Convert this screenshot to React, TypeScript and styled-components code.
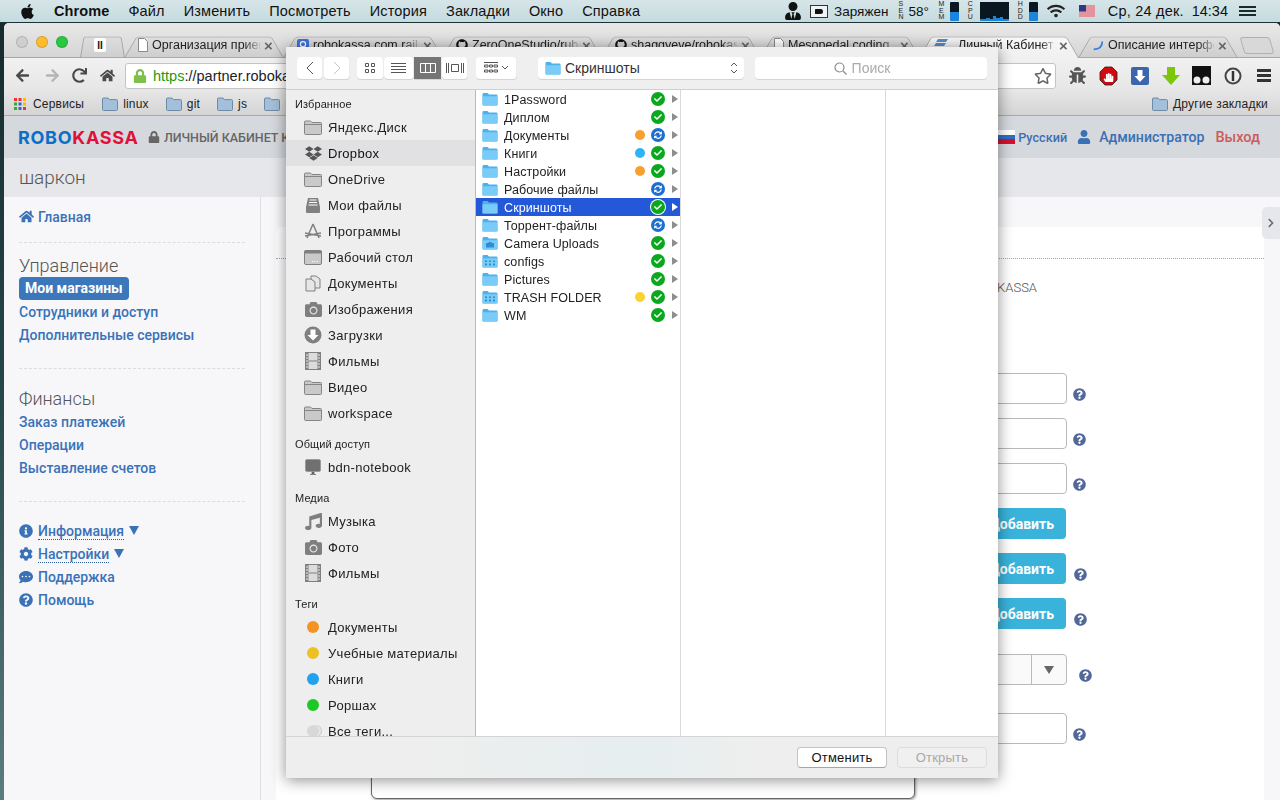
import React from 'react'
import styled, { createGlobalStyle } from 'styled-components'
import {
  FaApple,
  FaArrowLeft,
  FaArrowRight,
  FaBug,
  FaCamera,
  FaCheck,
  FaChevronRight,
  FaCog,
  FaCommentDots,
  FaDropbox,
  FaGithub,
  FaHandPaper,
  FaHome,
  FaInfoCircle,
  FaLock,
  FaMusic,
  FaQuestionCircle,
  FaRedo,
  FaRegStar,
  FaSyncAlt,
  FaUser,
  FaUserTie,
  FaWifi,
} from 'react-icons/fa'

const mac = '"Liberation Sans", Arial, sans-serif'
const web = 'Roboto, "Liberation Sans", sans-serif'

const GlobalStyle = createGlobalStyle`
  html, body {
    margin: 0;
    width: 1280px;
    height: 800px;
    overflow: hidden;
    background: linear-gradient(180deg, #16292c 0%, #27474a 50%, #5b7d80 100%);
  }
  * { box-sizing: border-box; }
`

const Screen = styled.div`
  position: relative;
  width: 1280px;
  height: 800px;
  display: flex;
  flex-direction: column;
  overflow: hidden;
  font-family: ${mac};
`

/* mac menu bar */
const MenuBar = styled.div`
  height: 23px;
  flex: none;
  display: flex;
  align-items: center;
  padding-left: 19px;
  background: linear-gradient(180deg, #d6e5e8, #c5dbe0);
  border-bottom: 1px solid #1d3336;
  color: #111;
  font-size: 14.5px;
`

const MenuItem = styled.span<{ $bold?: boolean }>`
  margin-left: ${({ $bold }) => ($bold ? '18px' : '19px')};
  font-weight: ${({ $bold }) => ($bold ? 700 : 400)};
  letter-spacing: ${({ $bold }) => ($bold ? '0.1px' : '0.15px')};
`

const Tray = styled.div`
  margin-left: auto;
  display: flex;
  align-items: center;
  height: 22px;
  padding-right: 24px;
`

const TrayItem = styled.span<{ $ml: number; $small?: boolean }>`
  margin-left: ${({ $ml }) => $ml}px;
  display: flex;
  align-items: center;
  white-space: nowrap;
  font-size: ${({ $small }) => ($small ? '13.5px' : 'inherit')};
`

const DateText = styled.span`
  letter-spacing: 0.2px;
`

const LetterStack = styled.span`
  display: flex;
  flex-direction: column;
  font-size: 7px;
  line-height: 6.5px;
  color: #222;
  width: 7px;
  text-align: center;
`

const MeterBar = styled.span`
  display: block;
  width: 9px;
  height: 19px;
  border-radius: 1px;
  background: linear-gradient(180deg, #0a1620 0 55%, #1b84dc 55% 100%);
`

const PlugBox = styled.span`
  display: flex;
  align-items: center;
  justify-content: center;
  width: 18px;
  height: 13px;
  border: 1px solid #333;
  background: #eef4f5;
`

const PlugDot = styled.span`
  width: 8px;
  height: 5px;
  border-radius: 1px 3px 3px 1px;
  background: #111;
`

const TrayList = styled.span`
  display: block;
  width: 17px;
  height: 10px;
  background: repeating-linear-gradient(180deg, #1a2a2c 0 2px, transparent 2px 4px);
`

/* browser window */
const Browser = styled.div`
  flex: 1;
  min-height: 0;
  margin-left: 4px;
  display: flex;
  flex-direction: column;
  border-radius: 5px 5px 0 0;
  overflow: hidden;
  background: #f7f7fa;
`

const TabStrip = styled.div`
  height: 35px;
  flex: none;
  display: flex;
  align-items: flex-end;
  padding-left: 12px;
  background: linear-gradient(180deg, #e8e8e8, #d6d6d6);
  border-bottom: 1px solid #a8a8a8;
`

const Lights = styled.div`
  display: flex;
  gap: 8px;
  width: 64px;
  align-self: flex-start;
  margin-top: 13px;
`

const Light = styled.span<{ $color: string }>`
  width: 12px;
  height: 12px;
  border-radius: 50%;
  background: ${({ $color }) => $color};
  box-shadow: inset 0 0 0 1px rgba(0, 0, 0, 0.14);
`

const Tab = styled.div<{ $active?: boolean; $width?: number }>`
  position: relative;
  isolation: isolate;
  flex: none;
  width: ${({ $width }) => $width ?? 160}px;
  margin-right: -1px;
  margin-bottom: -1px;
  height: 26px;
  display: flex;
  align-items: center;
  padding: 0 8px 0 ${({ $width }) => ($width ? 12 : 14)}px;
  gap: 4px;
  font-size: 12.5px;
  color: #222;

  svg { flex: none; }

  &::before {
    content: '';
    position: absolute;
    inset: 0;
    z-index: -1;
    border: 1px solid #a4a4a4;
    border-bottom: ${({ $active }) => ($active ? 'none' : '1px solid #a8a8a8')};
    border-radius: 4px 4px 0 0;
    background: ${({ $active }) =>
      $active ? 'linear-gradient(180deg, #f8f8f8, #f0f0f0)' : 'linear-gradient(180deg, #dedede, #cfcfcf)'};
    transform: perspective(34px) rotateX(14deg);
    transform-origin: bottom;
  }
`

const TabTitle = styled.span`
  flex: 1;
  min-width: 0;
  white-space: nowrap;
  -webkit-mask-image: linear-gradient(90deg, #000 85%, rgba(0, 0, 0, 0.15));
  mask-image: linear-gradient(90deg, #000 85%, rgba(0, 0, 0, 0.15));
`

const TabClose = styled.span`
  flex: none;
  color: #666;
  font-size: 15px;
  font-weight: 700;
  line-height: 1;
  width: 12px;
`

const PinIcon = styled.span`
  display: flex;
  justify-content: center;
  align-items: center;
  width: 12px;
  height: 14px;
  margin-left: 2px;
  border-radius: 2px;
  background: #fff;
  font-size: 10px;
  font-weight: 700;
  color: #111;
`

const NewTab = styled.span`
  flex: none;
  width: 30px;
  height: 17px;
  margin: 0 0 3px 5px;
  border: 1px solid #b0b0b0;
  border-radius: 3px;
  background: #d8d8d8;
  transform: skewX(16deg);
`

const UrlBar = styled.div`
  height: 33px;
  flex: none;
  display: flex;
  align-items: center;
  padding: 2px 0 0 2px;
  background: linear-gradient(180deg, #f1f1f1, #e6e6e6);
`

const NavIcon = styled.span<{ $width: number; $color?: string }>`
  width: ${({ $width }) => $width}px;
  flex: none;
  display: flex;
  justify-content: center;
  color: ${({ $color }) => $color ?? '#4a4a4a'};
  font-size: 15px;
`

const Omnibox = styled.div`
  width: 931px;
  flex: none;
  height: 26px;
  margin: 0 6px 0 3px;
  display: flex;
  align-items: center;
  gap: 6px;
  padding: 0 3px 0 7px;
  background: #fff;
  border: 1px solid #c4c4c4;
  border-radius: 3px;
  font-size: 14.5px;
  color: #222;
  svg { flex: none; }
`

const Green = styled.span`
  color: #1a9a14;
`

const UrlText = styled.span`
  flex: 1;
  white-space: nowrap;
`

const ExtRow = styled.div`
  display: flex;
  flex: none;
  align-items: center;
  width: 217px;
`

const ExtSlot = styled.span`
  width: 31px;
  display: flex;
  justify-content: center;
  align-items: center;
`

const BookmarkBar = styled.div`
  height: 25px;
  flex: none;
  display: flex;
  align-items: center;
  padding: 1px 0 0 10px;
  font-size: 12px;
  letter-spacing: 0.2px;
  color: #222;
  background: linear-gradient(180deg, #e6e6e6, #d4d4d4);
  border-bottom: 1px solid #a9a9a9;
`

const Bookmark = styled.span<{ $ml?: number }>`
  display: flex;
  align-items: center;
  gap: 5px;
  margin-left: ${({ $ml }) => $ml ?? 0}px;
  white-space: nowrap;
`

/* page */
const PageHeader = styled.header`
  height: 42px;
  flex: none;
  display: flex;
  align-items: center;
  padding: 0 20px 0 14px;
  background: #d5d8dd;
  font-family: ${web};
`

const Logo = styled.span`
  font-family: Inter, "Liberation Sans", sans-serif;
  font-size: 18px;
  font-weight: 700;
  letter-spacing: 0.7px;
  width: 120px;
  white-space: nowrap;
  color: #e0103a;
`

const LogoBlue = styled.span`
  color: #0b6fc9;
`

const Cabinet = styled.span`
  display: flex;
  align-items: center;
  gap: 4px;
  margin-left: 10px;
  font-size: 12.5px;
  font-weight: 500;
  color: #666;
`

const HeaderRight = styled.div`
  margin-left: auto;
  display: flex;
  align-items: center;
  color: #3a70b5;
  font-weight: 500;
`

const Flag = styled.span`
  width: 20px;
  height: 14px;
  background: linear-gradient(180deg, #fff 0 33%, #2c6fc4 33% 66%, #d5102f 66% 100%);
`

const Language = styled.span`
  margin: 0 10px 0 3px;
  font-size: 12.7px;
`

const UserName = styled.span`
  margin: 0 11px 0 8px;
  font-size: 14.1px;
`

const Logout = styled.span`
  color: #cc5c5c;
  font-size: 14.5px;
`

const SubHeader = styled.div`
  height: 39px;
  flex: none;
  display: flex;
  align-items: center;
  padding-left: 15px;
  background: #e6e7ea;
  color: #555;
  font: 300 19px ${web};
`

const PageBody = styled.div`
  flex: 1;
  min-height: 0;
  display: flex;
  background: #f7f7fa;
  font-family: ${web};
`

const SideNav = styled.nav`
  width: 257px;
  flex: none;
  padding: 8px 0 0 15px;
  border-right: 1px solid #dfdfe3;
`

const NavLink = styled.a<{ $gap?: number }>`
  display: flex;
  align-items: center;
  gap: ${({ $gap }) => $gap ?? 5}px;
  height: 23px;
  color: #3a72b8;
  font-size: 14px;
  font-weight: 500;
  svg { flex: none; }
`

const NavPill = styled.span`
  display: inline-block;
  height: 23px;
  line-height: 23px;
  padding: 0 6px;
  border-radius: 4px;
  background: #3b78bb;
  color: #fff;
  font-weight: 700;
  font-size: 14px;
`

const Dotted = styled.span`
  border-bottom: 1px dotted #2f5f9f;
  line-height: 16px;
  margin-top: 2px;
`

const Caret = styled.span`
  width: 0;
  height: 0;
  border-left: 5px solid transparent;
  border-right: 5px solid transparent;
  border-top: 9px solid #3a72b8;
`

const NavDivider = styled.hr<{ $top: number; $bottom: number }>`
  width: 226px;
  height: 0;
  margin: ${({ $top }) => $top}px 0 ${({ $bottom }) => $bottom}px;
  border: 0;
  border-top: 1px dashed #dcdce0;
`

const NavHeading = styled.div`
  height: 23px;
  line-height: 23px;
  font-size: 18px;
  font-weight: 300;
  color: #555;
`

const Main = styled.main`
  flex: 1;
  min-width: 0;
  padding: 30px 16px 0 15px;
  position: relative;
`

const Panel = styled.section`
  height: 100%;
  background: #fff;
  border-radius: 6px 0 0 0;
`

const PanelHead = styled.div`
  height: 32px;
  border-bottom: 1px dotted #9aa6ba;
`

const Intro = styled.p`
  width: 761px;
  margin: 21px 0 77px;
  text-align: right;
  font-size: 13px;
  line-height: 16px;
  font-weight: 300;
  color: #555;
`

const FormRow = styled.div<{ $mt?: number }>`
  display: flex;
  align-items: center;
  height: 31px;
  margin: ${({ $mt }) => $mt ?? 14}px 0 0 424px;
`

const Field = styled.div`
  width: 367px;
  height: 31px;
  background: #fff;
  border: 1px solid #b9b9b9;
  border-radius: 4px;
`

const AddButton = styled.div`
  width: 366px;
  height: 31px;
  margin-right: 1px;
  padding-right: 12px;
  text-align: right;
  line-height: 32px;
  background: #39b3da;
  border-radius: 4px;
  color: #fff;
  font-size: 14px;
  font-weight: 700;
`

const Select = styled.div`
  width: 367px;
  height: 31px;
  display: flex;
  justify-content: flex-end;
  background: #fafafa;
  border: 1px solid #b9b9b9;
  border-radius: 4px;
`

const SelectArrow = styled.span`
  width: 35px;
  display: flex;
  align-items: center;
  justify-content: center;
  border-left: 1px solid #b9b9b9;

  &::after {
    content: '';
    border-left: 5px solid transparent;
    border-right: 5px solid transparent;
    border-top: 8px solid #666;
  }
`

const Help = styled.span<{ $gap: number }>`
  display: flex;
  margin: 11px 0 0 ${({ $gap }) => $gap}px;
  color: #52689a;
  font-size: 13px;
`

const SideHandle = styled.span`
  position: absolute;
  top: 10px;
  right: 0;
  width: 18px;
  height: 32px;
  display: flex;
  align-items: center;
  justify-content: center;
  background: #e6e7ea;
  border-radius: 5px 0 0 5px;
  color: #5f6b80;
  font-size: 10px;
`

const BackModal = styled.div`
  position: absolute;
  left: 371px;
  top: 600px;
  width: 544px;
  height: 199px;
  background: #fff;
  border: 1px solid #666;
  border-radius: 6px;
  box-shadow: 1px 1px 3px rgba(0, 0, 0, 0.4);
`

/* finder dialog */
const Dialog = styled.div`
  position: absolute;
  left: 286px;
  top: 47px;
  width: 712px;
  height: 731px;
  display: flex;
  flex-direction: column;
  background: #ededed;
  box-shadow: 0 2px 14px rgba(0, 0, 0, 0.45);
  color: #222;
`

const DialogBar = styled.div`
  height: 43px;
  flex: none;
  display: flex;
  align-items: center;
  padding: 0 11px;
  background: #efefef;
  border-bottom: 1px solid #cfcfcf;
`

const ToolButton = styled.span<{ $width: number; $ml?: number; $active?: boolean }>`
  width: ${({ $width }) => $width}px;
  height: 22px;
  margin-left: ${({ $ml }) => $ml ?? 0}px;
  display: flex;
  align-items: center;
  justify-content: center;
  gap: 3px;
  background: ${({ $active }) => ($active ? '#757575' : '#fff')};
  border-right: 1px solid #ececec;
  border-radius: ${({ $active }) => ($active ? 0 : 4)}px;
  box-shadow: 0 1px 0 #d4d4d4;
`

const PathPopup = styled.span`
  width: 206px;
  height: 22px;
  margin-left: 21px;
  display: flex;
  align-items: center;
  gap: 4px;
  padding: 0 6px 0 7px;
  background: #fff;
  border-radius: 4px;
  box-shadow: 0 1px 0 #d4d4d4;
  font-size: 14px;
  color: #333;
`

const PathName = styled.span`
  flex: 1;
`

const SearchBox = styled.span`
  width: 232px;
  height: 22px;
  margin-left: 11px;
  display: flex;
  align-items: center;
  justify-content: center;
  gap: 5px;
  padding-right: 18px;
  background: #fff;
  border-radius: 4px;
  box-shadow: 0 1px 0 #d4d4d4;
  font-size: 14px;
  color: #aaa;
`

const DialogBody = styled.div`
  flex: 1;
  min-height: 0;
  display: flex;
`

const Places = styled.aside`
  width: 190px;
  flex: none;
  overflow: hidden;
  background: #eeeeee;
  border-right: 1px solid #b9b9b9;
`

const PlacesHeading = styled.div<{ $first?: boolean }>`
  height: 20px;
  margin-top: ${({ $first }) => ($first ? 4 : 8)}px;
  padding-left: 9px;
  line-height: 20px;
  font-size: 11px;
  letter-spacing: 0.1px;
  color: #222;
`

const PlaceRow = styled.div<{ $active?: boolean }>`
  height: 26px;
  display: flex;
  align-items: center;
  padding-left: 18px;
  font-size: 13px;
  letter-spacing: 0.3px;
  color: ${({ $active }) => ($active ? '#111' : '#222')};
  background: ${({ $active }) => ($active ? '#e1e1e3' : 'transparent')};
`

const PlaceIcon = styled.span`
  width: 18px;
  margin-right: 6px;
  display: flex;
  justify-content: center;
  align-items: center;
  color: #7f7f7f;
  font-size: 17px;
`

const TagDot = styled.span<{ $color: string; $stacked?: boolean }>`
  width: 12px;
  height: 12px;
  border-radius: 50%;
  background: ${({ $color }) => $color};
  box-shadow: ${({ $stacked }) => ($stacked ? '2px 0 0 #e6e6e6, 3px 0 0 #c8c8c8' : 'none')};
`

const Column = styled.div<{ $grow?: boolean }>`
  width: ${({ $grow }) => ($grow ? 'auto' : '205px')};
  flex: ${({ $grow }) => ($grow ? 1 : 'none')};
  background: #fff;
  border-right: ${({ $grow }) => ($grow ? 'none' : '1px solid #d9d9d9')};
`

const FileRow = styled.div<{ $selected?: boolean }>`
  height: 18px;
  display: flex;
  align-items: center;
  padding-left: 6px;
  font-size: 12.5px;
  letter-spacing: 0.1px;
  color: ${({ $selected }) => ($selected ? '#fff' : '#222')};
  background: ${({ $selected }) => ($selected ? '#2359d8' : 'transparent')};
`

const FileName = styled.span`
  flex: 1;
  margin-left: 6px;
  padding-top: 1px;
`

const FileTag = styled.span<{ $color: string }>`
  width: 10px;
  height: 10px;
  margin-right: 6px;
  border-radius: 50%;
  background: ${({ $color }) => $color};
`

const Badge = styled.span<{ $sync?: boolean; $selected?: boolean }>`
  width: 14px;
  height: 14px;
  display: flex;
  align-items: center;
  justify-content: center;
  border-radius: 50%;
  color: #fff;
  font-size: 8px;
  background: ${({ $sync }) => ($sync ? '#1a6fd0' : '#0aa81c')};
  box-shadow: ${({ $selected }) => ($selected ? '0 0 0 1px #fff' : 'none')};
`

const Disclosure = styled.span<{ $selected?: boolean }>`
  width: 0;
  height: 0;
  margin: 0 2px 0 7px;
  border-top: 4px solid transparent;
  border-bottom: 4px solid transparent;
  border-left: 6px solid ${({ $selected }) => ($selected ? '#fff' : '#8d8d8d')};
`

const DialogFooter = styled.div`
  height: 42px;
  flex: none;
  display: flex;
  align-items: center;
  justify-content: flex-end;
  gap: 10px;
  padding-right: 11px;
  background: linear-gradient(90deg, #eeeeee 20%, #e6eef0 50%, #eeeeee 65%);
  border-top: 1px solid #d4d4d4;
`

const FooterButton = styled.span<{ $disabled?: boolean }>`
  width: 90px;
  height: 21px;
  text-align: center;
  line-height: 20px;
  font-size: 13px;
  letter-spacing: 0.2px;
  border-radius: 4px;
  background: ${({ $disabled }) => ($disabled ? '#f0f0f0' : '#fff')};
  border: 1px solid ${({ $disabled }) => ($disabled ? '#dcdcdc' : '#c4c4c4')};
  border-bottom-color: ${({ $disabled }) => ($disabled ? '#dcdcdc' : '#a5a5a5')};
  color: ${({ $disabled }) => ($disabled ? '#a8a8a8' : '#111')};
`

function BlueFolder({ kind, size = 16 }: { kind?: 'camera' | 'grid'; size?: number }) {
  return (
    <svg width={size} height={(size * 7) / 8} viewBox="0 0 16 14">
      <path d="M0.5 2.2 Q0.5 1 1.7 1 H5.6 L7 2.6 H14.4 Q15.5 2.6 15.5 3.7 V12.8 Q15.5 13.5 14.6 13.5 H1.4 Q0.5 13.5 0.5 12.8 Z" fill="#4fb0ec" />
      <path d="M0.5 4.2 H15.5 V12.8 Q15.5 13.5 14.6 13.5 H1.4 Q0.5 13.5 0.5 12.8 Z" fill="#79cbf8" />
      {kind === 'camera' && <path d="M4 7 H6 L7 6 H9 L10 7 H12 V11.5 H4 Z" fill="#2b8fd4" />}
      {kind === 'grid' && (
        <path d="M3 6.5 H5 V8 H3 Z M7 6.5 H9 V8 H7 Z M11 6.5 H13 V8 H11 Z M3 9.5 H5 V11.5 H3 Z M7 9.5 H9 V11.5 H7 Z M11 9.5 H13 V11.5 H11 Z" fill="#2b8fd4" />
      )}
    </svg>
  )
}

function BookmarkFolder() {
  return (
    <svg width="16" height="14" viewBox="0 0 16 14">
      <path d="M0.5 2 Q0.5 1 1.5 1 H6 L7.5 2.6 H14.5 Q15.5 2.6 15.5 3.6 V12.5 Q15.5 13.5 14.5 13.5 H1.5 Q0.5 13.5 0.5 12.5 Z" fill="#a3bfd9" stroke="#6f8aa6" />
    </svg>
  )
}

function GreyFolder() {
  return (
    <svg width="18" height="15" viewBox="0 0 18 15">
      <path d="M0.5 2 Q0.5 1 1.5 1 H6.5 L8 2.5 H16.5 Q17.5 2.5 17.5 3.5 V13.5 Q17.5 14.5 16.5 14.5 H1.5 Q0.5 14.5 0.5 13.5 Z" fill="#c9c9c9" stroke="#858585" />
      <path d="M1 4.5 H17" stroke="#858585" />
    </svg>
  )
}

function FilmStrip() {
  return (
    <svg width="16" height="18" viewBox="0 0 16 18">
      <rect x="0.5" y="0.5" width="15" height="17" fill="#dcdcdc" stroke="#808080" />
      <rect x="0.5" y="0.5" width="3" height="17" fill="#808080" />
      <rect x="12.5" y="0.5" width="3" height="17" fill="#808080" />
      <path d="M1 3 H3 M1 6 H3 M1 9 H3 M1 12 H3 M1 15 H3 M13 3 H15 M13 6 H15 M13 9 H15 M13 12 H15 M13 15 H15" stroke="#eee" />
      <path d="M3.5 9 H12.5" stroke="#808080" />
    </svg>
  )
}

const placeIcons: Record<string, React.ReactNode> = {
  folder: <GreyFolder />,
  dropbox: <FaDropbox color="#555" />,
  inbox: (
    <svg width="16" height="17" viewBox="0 0 16 17">
      <path d="M3 1 H13 L15 10 V15 Q15 16 14 16 H2 Q1 16 1 15 V10 Z" fill="#808080" />
      <path d="M4.5 3 H11.5 M4 5.5 H12 M3.5 8 H12.5" stroke="#fff" />
    </svg>
  ),
  apps: (
    <svg width="18" height="17" viewBox="0 0 18 17" fill="none" stroke="#808080" strokeWidth="1.5">
      <path d="M9 1 L3 15 M9 1 L15 15 M1 10 L17 13 M17 10 L1 13" />
    </svg>
  ),
  desktop: (
    <svg width="18" height="15" viewBox="0 0 18 15">
      <rect x="0.5" y="0.5" width="17" height="14" rx="1.5" fill="#c9c9c9" stroke="#808080" />
      <rect x="0.5" y="0.5" width="17" height="3" fill="#808080" />
      <path d="M8 11.5 H9 M10.5 11.5 H11.5 M13 11.5 H14" stroke="#fff" />
    </svg>
  ),
  docs: (
    <svg width="16" height="17" viewBox="0 0 16 17" fill="#e6e6e6" stroke="#808080">
      <path d="M6 1 H11 L15 4 V13 H6 Z" />
      <path d="M1 4 H6 L10 7 V16 H1 Z" />
    </svg>
  ),
  camera: <FaCamera />,
  download: (
    <svg width="18" height="18" viewBox="0 0 18 18">
      <circle cx="9" cy="9" r="8.5" fill="#808080" />
      <path d="M6.5 3.5 H11.5 V9 H14.5 L9 14.5 L3.5 9 H6.5 Z" fill="#fff" />
    </svg>
  ),
  film: <FilmStrip />,
  monitor: (
    <svg width="16" height="16" viewBox="0 0 16 16">
      <rect x="0.5" y="0.5" width="15" height="12" rx="1.5" fill="#707070" stroke="#9a9a9a" />
      <path d="M5 15.5 H11 M7 13 H9 V15 H7 Z" stroke="#808080" />
    </svg>
  ),
  music: <FaMusic />,
}

type Place = { name: string; icon?: string; tag?: string; active?: boolean; stacked?: boolean }

const placeGroups: { title: string; items: Place[] }[] = [
  {
    title: 'Избранное',
    items: [
      { name: 'Яндекс.Диск', icon: 'folder' },
      { name: 'Dropbox', icon: 'dropbox', active: true },
      { name: 'OneDrive', icon: 'folder' },
      { name: 'Мои файлы', icon: 'inbox' },
      { name: 'Программы', icon: 'apps' },
      { name: 'Рабочий стол', icon: 'desktop' },
      { name: 'Документы', icon: 'docs' },
      { name: 'Изображения', icon: 'camera' },
      { name: 'Загрузки', icon: 'download' },
      { name: 'Фильмы', icon: 'film' },
      { name: 'Видео', icon: 'folder' },
      { name: 'workspace', icon: 'folder' },
    ],
  },
  { title: 'Общий доступ', items: [{ name: 'bdn-notebook', icon: 'monitor' }] },
  {
    title: 'Медиа',
    items: [
      { name: 'Музыка', icon: 'music' },
      { name: 'Фото', icon: 'camera' },
      { name: 'Фильмы', icon: 'film' },
    ],
  },
  {
    title: 'Теги',
    items: [
      { name: 'Документы', tag: '#f39322' },
      { name: 'Учебные материалы', tag: '#ebc221' },
      { name: 'Книги', tag: '#1fa3ef' },
      { name: 'Роршах', tag: '#1dc724' },
      { name: 'Все теги...', tag: '#d8d8d8', stacked: true },
    ],
  },
]

type FileItem = { name: string; tag?: string; sync?: boolean; kind?: 'camera' | 'grid'; selected?: boolean }

const files: FileItem[] = [
  { name: '1Password' },
  { name: 'Диплом' },
  { name: 'Документы', tag: '#f7a02f', sync: true },
  { name: 'Книги', tag: '#2fb4f5' },
  { name: 'Настройки', tag: '#f7a02f' },
  { name: 'Рабочие файлы', sync: true },
  { name: 'Скриншоты', selected: true },
  { name: 'Торрент-файлы', sync: true },
  { name: 'Camera Uploads', kind: 'camera' },
  { name: 'configs', kind: 'grid' },
  { name: 'Pictures' },
  { name: 'TRASH FOLDER', tag: '#fbd22f', kind: 'grid' },
  { name: 'WM' },
]

const docFavicon = (
  <svg width="10" height="14" viewBox="0 0 10 14">
    <path d="M0.5 0.5 H6.5 L9.5 3.5 V13.5 H0.5 Z" fill="#fff" stroke="#888" />
  </svg>
)

const tabs: { title: string; icon: React.ReactNode; active?: boolean }[] = [
  { title: 'Организация прием', icon: docFavicon },
  {
    title: 'robokassa.com rails',
    icon: (
      <svg width="12" height="12" viewBox="0 0 14 14">
        <rect width="14" height="14" rx="2" fill="#3f74e0" />
        <circle cx="7" cy="6" r="3" fill="none" stroke="#fff" strokeWidth="1.5" />
      </svg>
    ),
  },
  { title: 'ZeroOneStudio/rub', icon: <FaGithub size={12} color="#111" /> },
  { title: 'shaggyeve/robokas', icon: <FaGithub size={12} color="#111" /> },
  { title: 'Mesopedal.coding', icon: docFavicon },
  {
    title: 'Личный Кабинет К',
    active: true,
    icon: (
      <svg width="21" height="12" viewBox="0 0 21 12" fill="#5b8dc4">
        <path d="M5 0 H15 L13 3 H3 Z M3 4 H13 L11 7 H1 Z M1 8 H11 L9 11 H0 Z" />
      </svg>
    ),
  },
  {
    title: 'Описание интерфе',
    icon: (
      <svg width="12" height="12" viewBox="0 0 14 14" fill="none" stroke="#2f7fe0" strokeWidth="2">
        <path d="M12 3 Q12 12 2 12" />
      </svg>
    ),
  },
]

function ViewIcon({ d, width = 18, color = '#555' }: { d: string; width?: number; color?: string }) {
  return (
    <svg width={width} height="14" viewBox={`0 0 ${width} 14`} fill="none" stroke={color}>
      <path d={d} />
    </svg>
  )
}

function HelpMark({ gap }: { gap: number }) {
  return (
    <Help $gap={gap}>
      <FaQuestionCircle />
    </Help>
  )
}

function StopExt() {
  return (
    <svg width="19" height="20" viewBox="0 0 19 20">
      <path d="M6 1 H13 L18 6 V14 L13 19 H6 L1 14 V6 Z" fill="#d4080f" stroke="#222" strokeWidth="0.8" />
      <foreignObject x="4" y="4" width="12" height="12">
        <FaHandPaper size={11} color="#fff" />
      </foreignObject>
    </svg>
  )
}

export default function App() {
  return (
    <Screen>
      <GlobalStyle />
      <MenuBar>
        <FaApple size={17} color="#111" />
        <MenuItem $bold>Chrome</MenuItem>
        {['Файл', 'Изменить', 'Посмотреть', 'История', 'Закладки', 'Окно', 'Справка'].map((item) => (
          <MenuItem key={item}>{item}</MenuItem>
        ))}
        <Tray>
          <TrayItem $ml={0}>
            <FaUserTie size={18} color="#111" />
          </TrayItem>
          <TrayItem $ml={8}>
            <PlugBox>
              <PlugDot />
            </PlugBox>
          </TrayItem>
          <TrayItem $ml={6} $small>
            Заряжен
          </TrayItem>
          <TrayItem $ml={9}>
            <LetterStack>
              <span>S</span>
              <span>E</span>
              <span>N</span>
            </LetterStack>
          </TrayItem>
          <TrayItem $ml={4} $small>
            58°
          </TrayItem>
          <TrayItem $ml={9}>
            <LetterStack>
              <span>M</span>
              <span>E</span>
              <span>M</span>
            </LetterStack>
          </TrayItem>
          <TrayItem $ml={5}>
            <MeterBar />
          </TrayItem>
          <TrayItem $ml={8}>
            <LetterStack>
              <span>C</span>
              <span>P</span>
              <span>U</span>
            </LetterStack>
          </TrayItem>
          <TrayItem $ml={6}>
            <svg width="29" height="19" viewBox="0 0 29 19">
              <rect width="29" height="19" fill="#0a1620" />
              <path d="M0 19 V17 H6 V16 H10 V17 H13 V14 H16 V16 H20 V15 H23 V17 H29 V19 Z" fill="#1b84dc" />
            </svg>
          </TrayItem>
          <TrayItem $ml={8}>
            <LetterStack>
              <span>H</span>
              <span>D</span>
              <span>D</span>
            </LetterStack>
          </TrayItem>
          <TrayItem $ml={5}>
            <MeterBar />
          </TrayItem>
          <TrayItem $ml={9}>
            <FaWifi size={18} color="#222" />
          </TrayItem>
          <TrayItem $ml={14}>
            <svg width="16" height="12" viewBox="0 0 16 12">
              <rect width="16" height="12" fill="#fff" />
              <path d="M0 1 H16 M0 3 H16 M0 5 H16 M0 7 H16 M0 9 H16 M0 11 H16" stroke="#c8283c" />
              <rect width="7" height="6.5" fill="#2b3a86" />
            </svg>
          </TrayItem>
          <TrayItem $ml={13}>
            <DateText>Ср, 24 дек.</DateText>
          </TrayItem>
          <TrayItem $ml={8}>14:34</TrayItem>
          <TrayItem $ml={11}>
            <TrayList />
          </TrayItem>
        </Tray>
      </MenuBar>

      <Browser>
        <TabStrip>
          <Lights>
            <Light $color="#cfcfcf" />
            <Light $color="#fdbc2e" />
            <Light $color="#28c840" />
          </Lights>
          <Tab $width={45}>
            <PinIcon>II</PinIcon>
          </Tab>
          {tabs.map((tab) => (
            <Tab key={tab.title} $active={tab.active}>
              {tab.icon}
              <TabTitle>{tab.title}</TabTitle>
              <TabClose>×</TabClose>
            </Tab>
          ))}
          <NewTab />
        </TabStrip>

        <UrlBar>
          <NavIcon $width={32}>
            <FaArrowLeft />
          </NavIcon>
          <NavIcon $width={28} $color="#b5b5b5">
            <FaArrowRight />
          </NavIcon>
          <NavIcon $width={26}>
            <FaRedo />
          </NavIcon>
          <NavIcon $width={30}>
            <FaHome />
          </NavIcon>
          <Omnibox>
            <FaLock size={14} color="#7fc04a" />
            <UrlText>
              <Green>https</Green>://partner.robokassa.ru
            </UrlText>
            <FaRegStar size={18} color="#666" />
          </Omnibox>
          <ExtRow>
            <ExtSlot>
              <FaBug size={17} color="#555" />
            </ExtSlot>
            <ExtSlot>
              <StopExt />
            </ExtSlot>
            <ExtSlot>
              <svg width="18" height="18" viewBox="0 0 18 18">
                <rect width="18" height="18" rx="2" fill="#3b66ad" />
                <path d="M6.5 3 H11.5 V9 H14.5 L9 15 L3.5 9 H6.5 Z" fill="#fff" />
              </svg>
            </ExtSlot>
            <ExtSlot>
              <svg width="20" height="20" viewBox="0 0 20 20">
                <path d="M6 1 H14 V9 H19 L10 19 L1 9 H6 Z" fill="#7cc70e" />
              </svg>
            </ExtSlot>
            <ExtSlot>
              <svg width="19" height="19" viewBox="0 0 19 19">
                <rect width="19" height="19" fill="#111" />
                <circle cx="5" cy="14" r="3.5" fill="#eee" />
                <circle cx="14" cy="14" r="3.5" fill="#eee" />
              </svg>
            </ExtSlot>
            <ExtSlot>
              <svg width="18" height="18" viewBox="0 0 18 18">
                <circle cx="9" cy="9" r="7.5" fill="#eee" stroke="#444" strokeWidth="2" />
                <path d="M9 4 V14" stroke="#333" strokeWidth="2.5" />
              </svg>
            </ExtSlot>
            <ExtSlot>
              <svg width="14" height="13" viewBox="0 0 14 13" fill="#333">
                <rect width="14" height="3" />
                <rect y="5" width="14" height="3" />
                <rect y="10" width="14" height="3" />
              </svg>
            </ExtSlot>
          </ExtRow>
        </UrlBar>

        <BookmarkBar>
          <svg width="12" height="12" viewBox="0 0 12 12">
            <rect width="3" height="3" fill="#e33" />
            <rect x="4.5" width="3" height="3" fill="#e33" />
            <rect x="9" width="3" height="3" fill="#fb0" />
            <rect y="4.5" width="3" height="3" fill="#3a3" />
            <rect x="4.5" y="4.5" width="3" height="3" fill="#36c" />
            <rect x="9" y="4.5" width="3" height="3" fill="#fb0" />
            <rect y="9" width="3" height="3" fill="#3a3" />
            <rect x="4.5" y="9" width="3" height="3" fill="#36c" />
            <rect x="9" y="9" width="3" height="3" fill="#e33" />
          </svg>
          <Bookmark $ml={7}>Сервисы</Bookmark>
          <Bookmark $ml={18}>
            <BookmarkFolder />
            linux
          </Bookmark>
          <Bookmark $ml={17}>
            <BookmarkFolder />
            git
          </Bookmark>
          <Bookmark $ml={17}>
            <BookmarkFolder />
            js
          </Bookmark>
          <Bookmark $ml={17}>
            <BookmarkFolder />
            R
          </Bookmark>
          <Bookmark $ml={858}>
            <BookmarkFolder />
            Другие закладки
          </Bookmark>
        </BookmarkBar>

        <PageHeader>
          <Logo>
            <LogoBlue>ROBO</LogoBlue>KASSA
          </Logo>
          <Cabinet>
            <FaLock size={12} />
            ЛИЧНЫЙ КАБИНЕТ КЛИЕНТА
          </Cabinet>
          <HeaderRight>
            <Flag />
            <Language>Русский</Language>
            <FaUser size={14} />
            <UserName>Администратор</UserName>
            <Logout>Выход</Logout>
          </HeaderRight>
        </PageHeader>
        <SubHeader>шаркон</SubHeader>

        <PageBody>
          <SideNav>
            <NavLink $gap={4}>
              <FaHome size={15} />
              Главная
            </NavLink>
            <NavDivider $top={14} $bottom={11} />
            <NavHeading>Управление</NavHeading>
            <NavLink>
              <NavPill>Мои магазины</NavPill>
            </NavLink>
            <NavLink>Сотрудники и доступ</NavLink>
            <NavLink>Дополнительные сервисы</NavLink>
            <NavDivider $top={22} $bottom={18} />
            <NavHeading>Финансы</NavHeading>
            <NavLink>Заказ платежей</NavLink>
            <NavLink>Операции</NavLink>
            <NavLink>Выставление счетов</NavLink>
            <NavDivider $top={22} $bottom={17} />
            <NavLink>
              <FaInfoCircle size={14} />
              <Dotted>Информация</Dotted>
              <Caret />
            </NavLink>
            <NavLink>
              <FaCog size={14} />
              <Dotted>Настройки</Dotted>
              <Caret />
            </NavLink>
            <NavLink>
              <FaCommentDots size={14} />
              Поддержка
            </NavLink>
            <NavLink>
              <FaQuestionCircle size={14} />
              Помощь
            </NavLink>
          </SideNav>

          <Main>
            <SideHandle>
              <FaChevronRight />
            </SideHandle>
            <Panel>
              <PanelHead />
              <Intro>ROBOKASSA</Intro>
              <FormRow $mt={0}>
                <Field />
                <HelpMark gap={6} />
              </FormRow>
              <FormRow>
                <Field />
                <HelpMark gap={6} />
              </FormRow>
              <FormRow>
                <Field />
                <HelpMark gap={6} />
              </FormRow>
              <FormRow>
                <AddButton>Добавить</AddButton>
              </FormRow>
              <FormRow>
                <AddButton>Добавить</AddButton>
                <HelpMark gap={7} />
              </FormRow>
              <FormRow>
                <AddButton>Добавить</AddButton>
                <HelpMark gap={7} />
              </FormRow>
              <FormRow $mt={25}>
                <Select>
                  <SelectArrow />
                </Select>
                <HelpMark gap={12} />
              </FormRow>
              <FormRow $mt={28}>
                <Field />
                <HelpMark gap={6} />
              </FormRow>
            </Panel>
          </Main>
        </PageBody>
      </Browser>

      <BackModal />

      <Dialog>
        <DialogBar>
          <ToolButton $width={26}>
            <ViewIcon width={10} d="M8 1 L2 7 L8 13" />
          </ToolButton>
          <ToolButton $width={26} $ml={1}>
            <ViewIcon width={10} color="#c8c8c8" d="M2 1 L8 7 L2 13" />
          </ToolButton>
          <ToolButton $width={27} $ml={7}>
            <ViewIcon width={12} d="M1.5 2.5 H4.5 V5.5 H1.5 Z M7.5 2.5 H10.5 V5.5 H7.5 Z M1.5 8.5 H4.5 V11.5 H1.5 Z M7.5 8.5 H10.5 V11.5 H7.5 Z" />
          </ToolButton>
          <ToolButton $width={30}>
            <ViewIcon width={15} d="M0 2.5 H15 M0 5.5 H15 M0 8.5 H15 M0 11.5 H15" />
          </ToolButton>
          <ToolButton $width={28} $active>
            <ViewIcon width={16} color="#fff" d="M0.5 2.5 H15.5 V11.5 H0.5 Z M5.5 2.5 V11.5 M10.5 2.5 V11.5" />
          </ToolButton>
          <ToolButton $width={26}>
            <ViewIcon width={18} d="M5.5 3.5 H12.5 V10.5 H5.5 Z M0.5 2 V12 M2.5 2 V12 M15.5 2 V12 M17.5 2 V12" />
          </ToolButton>
          <ToolButton $width={41} $ml={8}>
            <ViewIcon width={14} d="M0 1.5 H14 M0.5 4 H4 V6 H0.5 Z M5.5 4 H8.5 V6 H5.5 Z M10 4 H13.5 V6 H10 Z M0.5 9 H4 V11 H0.5 Z M5.5 9 H8.5 V11 H5.5 Z M10 9 H13.5 V11 H10 Z" />
            <ViewIcon width={8} d="M1 5 L4 8 L7 5" />
          </ToolButton>
          <PathPopup>
            <BlueFolder />
            <PathName>Скриншоты</PathName>
            <ViewIcon width={8} d="M1 5 L4 2 L7 5 M1 9 L4 12 L7 9" />
          </PathPopup>
          <SearchBox>
            <svg width="13" height="13" viewBox="0 0 13 13" fill="none" stroke="#8c8c8c" strokeWidth="1.2">
              <circle cx="5.5" cy="5.5" r="4.5" />
              <path d="M9 9 L12.5 12.5" />
            </svg>
            Поиск
          </SearchBox>
        </DialogBar>

        <DialogBody>
          <Places>
            {placeGroups.map((group, i) => (
              <React.Fragment key={group.title}>
                <PlacesHeading $first={i === 0}>{group.title}</PlacesHeading>
                {group.items.map((item) => (
                  <PlaceRow key={item.name} $active={item.active}>
                    <PlaceIcon>
                      {item.tag ? <TagDot $color={item.tag} $stacked={item.stacked} /> : placeIcons[item.icon ?? 'folder']}
                    </PlaceIcon>
                    {item.name}
                  </PlaceRow>
                ))}
              </React.Fragment>
            ))}
          </Places>
          <Column>
            {files.map((file) => (
              <FileRow key={file.name} $selected={file.selected}>
                <BlueFolder kind={file.kind} />
                <FileName>{file.name}</FileName>
                {file.tag && <FileTag $color={file.tag} />}
                <Badge $sync={file.sync} $selected={file.selected}>
                  {file.sync ? <FaSyncAlt /> : <FaCheck />}
                </Badge>
                <Disclosure $selected={file.selected} />
              </FileRow>
            ))}
          </Column>
          <Column />
          <Column $grow />
        </DialogBody>

        <DialogFooter>
          <FooterButton>Отменить</FooterButton>
          <FooterButton $disabled>Открыть</FooterButton>
        </DialogFooter>
      </Dialog>
    </Screen>
  )
}
